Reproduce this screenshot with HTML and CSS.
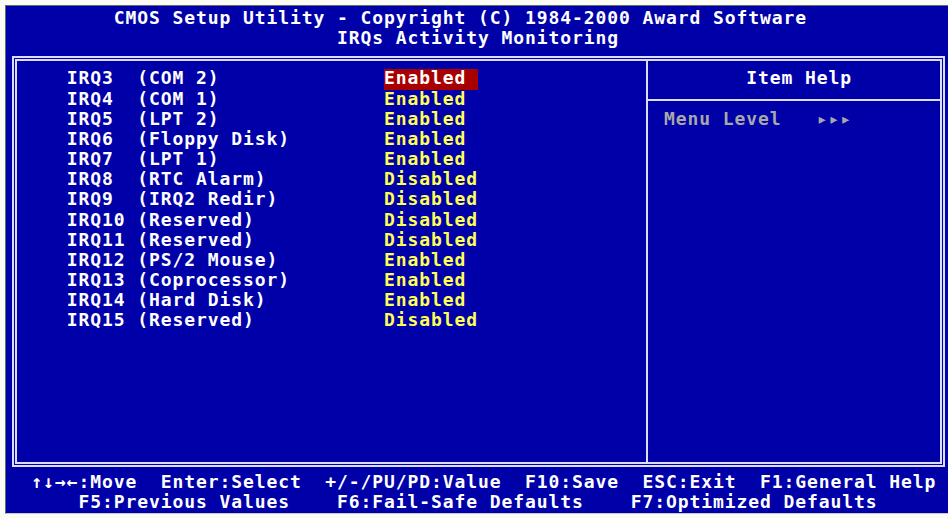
FILE: index.html
```html
<!DOCTYPE html>
<html lang="en">
<head>
<meta charset="utf-8">
<title>CMOS Setup Utility - IRQs Activity Monitoring</title>
<link rel="stylesheet" href="styles.css">
</head>
<body>
<div class="screen">
  <div class="title">
    <div class="row">         CMOS Setup Utility - Copyright (C) 1984-2000 Award Software</div>
    <div class="row">                            IRQs Activity Monitoring</div>
  </div>
  <div class="frame">
    <div class="frame-inner">
      <div class="items">
        <div class="row item"><span class="label">IRQ3  (COM 2)</span><span class="value selected">Enabled</span></div>
        <div class="row item"><span class="label">IRQ4  (COM 1)</span><span class="value">Enabled</span></div>
        <div class="row item"><span class="label">IRQ5  (LPT 2)</span><span class="value">Enabled</span></div>
        <div class="row item"><span class="label">IRQ6  (Floppy Disk)</span><span class="value">Enabled</span></div>
        <div class="row item"><span class="label">IRQ7  (LPT 1)</span><span class="value">Enabled</span></div>
        <div class="row item"><span class="label">IRQ8  (RTC Alarm)</span><span class="value">Disabled</span></div>
        <div class="row item"><span class="label">IRQ9  (IRQ2 Redir)</span><span class="value">Disabled</span></div>
        <div class="row item"><span class="label">IRQ10 (Reserved)</span><span class="value">Disabled</span></div>
        <div class="row item"><span class="label">IRQ11 (Reserved)</span><span class="value">Disabled</span></div>
        <div class="row item"><span class="label">IRQ12 (PS/2 Mouse)</span><span class="value">Enabled</span></div>
        <div class="row item"><span class="label">IRQ13 (Coprocessor)</span><span class="value">Enabled</span></div>
        <div class="row item"><span class="label">IRQ14 (Hard Disk)</span><span class="value">Enabled</span></div>
        <div class="row item"><span class="label">IRQ15 (Reserved)</span><span class="value">Disabled</span></div>
      </div>
      <div class="help">
        <div class="row help-title">        Item Help</div>
        <div class="help-rule"></div>
        <div class="row help-text"> Menu Level   ▸▸▸</div>
      </div>
    </div>
  </div>
  <div class="footer">
    <div class="row">  ↑↓→←:Move  Enter:Select  +/-/PU/PD:Value  F10:Save  ESC:Exit  F1:General Help</div>
    <div class="row">      F5:Previous Values    F6:Fail-Safe Defaults    F7:Optimized Defaults</div>
  </div>
</div>
</body>
</html>
```

FILE: styles.css
```css
html, body {
  margin: 0;
  padding: 0;
  background: #fcfcf6;
  overflow: hidden;
}

.screen {
  margin: 5px 0 0 5px;
  width: 942px;
  height: 507px;
  border-left: 1px solid #6a6a6a;
  border-top: 1px solid #6a6a6a;
  border-bottom: 1px solid #c8c8d0;
  background: #0000a8;
  color: #ffffff;
  font-family: "DejaVu Sans Mono", "Liberation Mono", monospace;
  font-weight: bold;
  font-size: 18px;
  letter-spacing: 0.913px;
}

.row {
  height: 20.16px;
  line-height: 17.7px;
  white-space: pre;
  overflow: visible;
}

.title {
  padding: 3px 0 0 2px;
}

.frame {
  box-sizing: border-box;
  margin: 6.68px 0 0 6px;
  width: 933px;
  height: 411px;
  border: 2px solid #dcdcff;
  padding: 1px;
}

.frame-inner {
  box-sizing: border-box;
  height: 100%;
  border: 2px solid #dcdcff;
  display: flex;
}

.items {
  width: 631px;
  border-right: 2px solid #dcdcff;
  padding: 8.48px 0 0 49.85px;
  box-sizing: border-box;
}

.item {
  display: flex;
}

.label {
  width: 317.25px;
  flex: none;
}

.value {
  width: 94px;
  flex: none;
  color: #ffff55;
}

.value.selected {
  background: #a80000;
  color: #ffffff;
}

.help {
  flex: 1;
  padding-top: 8.48px;
}

.help .row {
  padding-left: 4.25px;
}

.help-rule {
  height: 20.16px;
  display: flex;
  align-items: center;
}

.help-rule::before {
  content: "";
  display: block;
  width: 100%;
  height: 2px;
  background: #dcdcff;
}

.help-text {
  color: #a8a8a8;
}

.footer {
  margin-top: 5.68px;
  padding-left: 2px;
}
```
